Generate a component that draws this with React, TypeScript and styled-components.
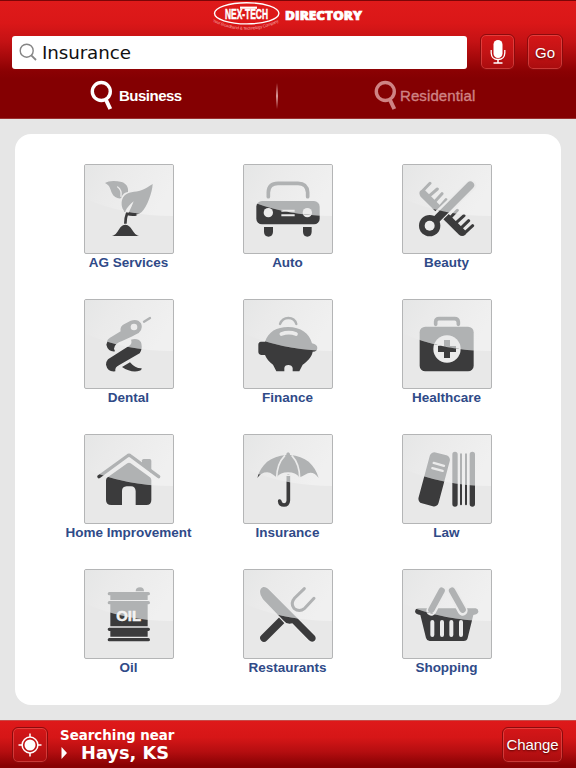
import React, { ReactNode } from "react";
import styled, { createGlobalStyle } from "styled-components";

const GlobalStyle = createGlobalStyle`
  *, *::before, *::after { box-sizing: border-box; }
  body { margin: 0; background: #e7e7e5; font-family: "Liberation Sans", Arial, sans-serif; }
`;

const Page = styled.div`
  width: 576px;
  height: 768px;
  display: flex;
  flex-direction: column;
  background: #e6e6e6;
  overflow: hidden;
`;

const Header = styled.header`
  height: 119px;
  flex: none;
  display: flex;
  flex-direction: column;
  border-top: 1px solid #7c0507;
  border-bottom: 1px solid #9a3030;
  background: linear-gradient(#df1a1a 0, #da1718 22px, #c51214 40px, #a90a0c 55px, #8b0103 70px, #840002 78px, #840002 100%);
`;

const LogoRow = styled.div`
  height: 33px;
  display: flex;
  justify-content: center;
`;

const SearchRow = styled.div`
  height: 36px;
  display: flex;
  align-items: center;
  padding: 0 13px 0 12px;
`;

const SearchBox = styled.div`
  width: 456px;
  height: 33px;
  margin-right: 13px;
  padding-left: 7px;
  display: flex;
  align-items: center;
  gap: 5px;
  border-radius: 3px;
  background: #fff;
  color: #111;
  font: 18.3px "DejaVu Sans", Verdana, sans-serif;
  letter-spacing: -0.1px;
`;

const GlossButton = styled.button<{ $width: number }>`
  width: ${(p) => p.$width}px;
  height: 36px;
  flex: none;
  padding: 0;
  display: flex;
  align-items: center;
  justify-content: center;
  border: 1px solid #8b0b0d;
  border-radius: 6px;
  box-shadow: inset 0 0 0 1px rgba(255, 130, 120, 0.38);
  background: linear-gradient(#d51618, #c11315 55%, #a90c0e);
  color: #fff;
  font: 15px "Liberation Sans", Arial, sans-serif;
  letter-spacing: -0.1px;
  text-shadow: 0 1px 2px rgba(70, 0, 0, 0.9);

  & + & { margin-left: 12px; }
`;

const Tabs = styled.nav`
  flex: 1;
  display: grid;
  grid-template-columns: 273px 8px 1fr;
  align-items: center;
  padding-top: 3px;
`;

const Tab = styled.div<{ $active?: boolean }>`
  display: flex;
  align-items: center;
  padding-left: ${(p) => (p.$active ? 90 : 93)}px;
  gap: ${(p) => (p.$active ? 3 : 0)}px;
  color: ${(p) => (p.$active ? "#fff" : "#cf8384")};
  font-size: 15px;
  font-weight: ${(p) => (p.$active ? 700 : 400)};
  letter-spacing: ${(p) => (p.$active ? "-0.5px" : "0.1px")};
  -webkit-text-stroke: ${(p) => (p.$active ? 0 : 0.35)}px currentColor;
`;

const Divider = styled.div`
  width: 2px;
  height: 26px;
  justify-self: center;
  background: linear-gradient(transparent, #d99a9a 50%, transparent);
`;

const Panel = styled.main`
  width: 546px;
  height: 571px;
  margin: 15px auto;
  padding: 30px 34px 0;
  flex: none;
  display: grid;
  grid-template-columns: repeat(3, 159px);
  grid-template-rows: repeat(4, 135px);
  border-radius: 16px;
  background: #fff;
`;

const Category = styled.div`
  display: flex;
  flex-direction: column;
  align-items: center;
`;

const TileFrame = styled.div`
  width: 90px;
  height: 90px;
  flex: none;
  border: 1px solid #b4b5b6;
  border-radius: 2px;
  background: #e8e8e8;
  overflow: hidden;

  svg { display: block; margin: -1px; }
`;

const Label = styled.div`
  margin-top: 1px;
  color: #2f4a88;
  font-size: 13.5px;
  line-height: 16px;
  font-weight: 700;
  white-space: nowrap;
`;

const Footer = styled.footer`
  height: 49px;
  flex: none;
  display: flex;
  align-items: center;
  padding: 0 13px 0 12px;
  border-top: 1px solid #c84a48;
  border-bottom: 1px solid #5c0003;
  background: linear-gradient(#de191a, #d61617 35%, #b50e10 65%, #870103 95%);
`;

const Place = styled.div`
  flex: 1;
  padding: 0 0 1px 12px;
  display: flex;
  flex-direction: column;
  color: #fff;
  font-family: "DejaVu Sans", Verdana, sans-serif;
  font-weight: 700;
`;

const PlaceHint = styled.div`
  font-size: 13.4px;
  line-height: 17px;
`;

const PlaceName = styled.div`
  display: flex;
  align-items: center;
  gap: 13px;
  font-size: 17.8px;
  line-height: 18px;
`;

const BG = "#ebebeb";
const UPPER = "M0 0V102Q120 156 270 156V0Z";
const LOWER = "M0 270V102Q120 156 270 156V270Z";

type TileProps = { id: string; ox: number; caption?: ReactNode; children: ReactNode };

// Each drawing is painted twice: pale above the gloss curve, dark below it.
function Tile({ id, ox, caption, children }: TileProps) {
  const shift = `translate(${-ox} -27)`;
  const art = <g transform={shift} fill="currentColor">{children}</g>;
  return (
    <TileFrame>
      <svg width="90" height="90" viewBox="0 0 270 270">
        <defs>
          <linearGradient id={`${id}-sheen`} x1="0" y1="0" x2="1" y2=".35">
            <stop offset="0" stopColor="#e5e6e6" />
            <stop offset=".35" stopColor="#eaeaea" />
            <stop offset="1" stopColor="#f0f0f0" />
          </linearGradient>
          <clipPath id={`${id}-up`}><path d={UPPER} /></clipPath>
          <clipPath id={`${id}-low`}><path d={LOWER} /></clipPath>
        </defs>
        <path d={UPPER} fill={`url(#${id}-sheen)`} />
        <g clipPath={`url(#${id}-up)`} color="#b0b2b3">{art}</g>
        <g clipPath={`url(#${id}-low)`} color="#3b3b3c">{art}</g>
        {caption && <g transform={shift}>{caption}</g>}
      </svg>
    </TileFrame>
  );
}

const line = (w: number, color = "currentColor", cap: "round" | "butt" = "round") => ({
  fill: "none",
  stroke: color,
  strokeWidth: w,
  strokeLinecap: cap,
  strokeLinejoin: "round" as const,
});

const Plant = () => (
  <>
    <path d="M136 84C146 77 166 76 186 81C199 85 207 96 205 111C196 111 189 117 184 130C174 132 162 126 157 115C151 101 151 91 136 84Z" />
    <path d="M174 96Q187 105 184 124" {...line(4, BG)} />
    <path d="M279 87C278 112 262 157 246 171C236 180 222 181 205 177C213 162 218 149 222 139C213 145 202 158 196 170C184 161 183 138 191 126C204 108 226 113 245 106C258 101 267 94 279 87Z" />
    <path d="M197 206Q197 188 202 176Q216 181 230 178" {...line(8, "#3b3b3c", "butt")} />
    <path d="M157 243C169 241 174 228 183 216Q197 203 211 216C221 228 226 241 238 243Z" />
  </>
);

const Car = () => (
  <>
    <path d="M145 125V112Q146 85 174 85H234Q261 85 263 112V125" {...line(11)} />
    <rect x="109" y="138" width="190" height="70" rx="17" />
    <circle cx="145" cy="173" r="14" fill={BG} />
    <circle cx="262" cy="173" r="14" fill={BG} />
    <path d="M184 167H224M184 181H224" {...line(6, BG, "butt")} />
    <path d="M132 216H159V231Q158 245 145.500 245Q133 245 132 231ZM249 216H275V231Q274 245 262 245Q250 245 249 231Z" />
  </>
);

const CombAndScissors = () => (
  <>
    <path d="M600 108L612 103L738 229L736 239Q726 247 717 239L602 125Q596 117 600 108Z" />
    <path d="M604 112L630 85M622 128L652 102M640 145L666 116M656 160L678 134M687 192L712 166M703 208L732 182M719 223L746 197M732 236L758 212" {...line(9)} />
    <path d="M641 197L752 91" {...line(34, BG)} />
    <path d="M645 197L751 91" {...line(23)} />
    <circle cx="629" cy="212" r="32" />
    <circle cx="629" cy="212" r="15" fill={BG} />
  </>
);

const Dental = () => (
  <>
    <path d="M253 95L271 84" {...line(7)} />
    <path d="M143 155Q141 149 151 143L183 124Q180 110 193 103L213 92Q234 85 244 100Q251 117 237 129Q221 138 189 152Q164 160 163 176L166 184Q145 186 140 164Z" />
    <circle cx="223" cy="111" r="10" fill={BG} />
    <path d="M145 208L211 166Q218 159 214 149Q235 143 244 157Q250 175 240 190L179 225Q165 231 167 244Q144 247 139 224Q139 215 145 208Z" />
    <path d="M187 231L211 217Q227 236 246 235Q247 242 233 244Q210 247 187 231Z" />
  </>
);

const Piggy = () => (
  <>
    <path d="M660 102Q667 84 685 84Q704 84 709 102" {...line(7)} />
    <path d="M615 155C625 125 650 111 684 111C723 111 748 130 756 160Q772 163 772 174Q772 185 758 185C755 203 739 216 728 224L718 244H698V234Q696 225 685 225Q674 225 673 234V244H649L639 224C627 215 620 207 615 195H603Q595 194 595 187V164Q595 156 603 155Z" />
    <path d="M664 132Q687 124 708 132" {...line(11, BG)} />
  </>
);

const MedicalBag = () => (
  <>
    <path d="M167 103V95Q168 86 177 86H224Q234 86 235 96V103" {...line(11)} />
    <rect x="119" y="110" width="162" height="134" rx="17" />
    <circle cx="201" cy="177" r="41" fill={BG} />
    <path d="M192 150H210V168H228V186H210V204H192V186H174V168H192Z" />
  </>
);

const House = () => (
  <>
    <path d="M247 121V106Q248 102 253 102H270Q275 102 275 107V144Z" />
    <path d="M139 166Q139 160 144 157L203 115Q208 112 213 115L271 157Q275 160 275 166V225Q275 240 260 240H228V198Q227 184 214 184H201Q187 185 187 198V240H155Q139 240 139 225Z" />
    <path d="M118 155L203 93Q208 89 213 93L297 155" {...line(10)} />
  </>
);

const Umbrella = () => (
  <>
    <path d="M592 159C602 119 632 93 679 90V86Q684 77 690 86V90C736 93 765 119 776 159Q758 134 735 149Q724 156 718 157Q707 142 684 142Q661 142 650 157Q637 146 630 143Q606 138 592 159Z" />
    <path d="M675 91Q650 117 650 159M695 91Q719 117 719 159" {...line(5, BG, "butt")} />
    <path d="M685 153V226Q684 240 672 240Q660 240 659 228" {...line(11)} />
    <path d="M678 153V149H691V153" fill={BG} />
  </>
);

const Books = () => (
  <>
    <g transform="translate(162.500 163) rotate(15)">
      <rect x="-31" y="-79" width="62" height="158" rx="14" />
      <path d="M-14 -47H18M-14 -31H18" {...line(7, BG)} />
    </g>
    <path d="M225 88V237M277 88V237" {...line(16)} />
    <path d="M243 88V238M258 88V238" {...line(6)} />
  </>
);

const Barrel = () => (
  <>
    <path d="M228 94Q228 82 241 82Q253 82 253 94Z" />
    <path d="M149 101H266M149 128H266M149 208H266M149 239H266" {...line(10)} />
    <path d="M152 101H264V120H152ZM152 131H264V199H152ZM152 209H264V230H152Z" />
  </>
);

const BarrelText = () => (
  <text x="170" y="182" fontSize="42" fontWeight="700" fontFamily="Liberation Sans, Arial, sans-serif" fill="#f3f3f3" stroke="#f3f3f3" strokeWidth="1.500" textLength="74" lengthAdjust="spacingAndGlyphs">OIL</text>
);

const Cutlery = () => (
  <>
    <path d="M733 86L704 114Q690 130 702 145Q718 158 734 145L762 115" {...line(9)} />
    <path d="M666 180L612 234" {...line(23)} />
    <path d="M602 105Q596 86 610 81Q617 80 624 86L765 228Q770 237 763 243Q755 248 747 241L700 192Q681 195 671 182L609 118Z" {...line(7, BG)} />
    <path d="M602 105Q596 86 610 81Q617 80 624 86L765 228Q770 237 763 243Q755 248 747 241L697 190Q681 195 671 182L609 118Z" />
  </>
);

const Basket = () => (
  <>
    <path d="M113 145H287Q296 147 295 156Q293 163 280 165L263 234Q261 243 251 243H149Q140 242 138 234L121 165Q106 164 105 154Q106 146 113 145Z" />
    <path d="M185 92L154 152M216 92L248 152" {...line(30, BG)} />
    <path d="M185 92L154 149M216 92L248 149" {...line(19)} />
    <path d="M157 186V225M186 186V225M214 186V225M243 186V225" {...line(12, BG)} />
  </>
);

const categories = [
  { name: "AG Services", ox: 73, Art: Plant },
  { name: "Auto", ox: 69, Art: Car },
  { name: "Beauty", ox: 546, Art: CombAndScissors },
  { name: "Dental", ox: 73, Art: Dental },
  { name: "Finance", ox: 549, Art: Piggy },
  { name: "Healthcare", ox: 66, Art: MedicalBag },
  { name: "Home Improvement", ox: 73, Art: House },
  { name: "Insurance", ox: 549, Art: Umbrella },
  { name: "Law", ox: 66, Art: Books },
  { name: "Oil", ox: 73, Art: Barrel, caption: <BarrelText /> },
  { name: "Restaurants", ox: 549, Art: Cutlery },
  { name: "Shopping", ox: 66, Art: Basket },
];

const Logo = () => (
  <svg width="160" height="33" viewBox="208 1 160 33">
    <defs><path id="tagline" d="M212.500 21.500Q246 38 280 21.500" /></defs>
    <ellipse cx="246.700" cy="13.300" rx="32.200" ry="10.600" fill="none" stroke="#fff" strokeWidth="1.400" />
    <text x="225" y="19" fontSize="15.500" fontFamily="Liberation Sans, Arial, sans-serif" fontWeight="700" fill="#fff" stroke="#fff" strokeWidth=".5" textLength="43" lengthAdjust="spacingAndGlyphs">NEX-TECH</text>
    <path d="M240 6.600H257V8.800H240Z" fill="#fff" />
    <text fontSize="4.200" fill="#f4a7a5" fontFamily="Liberation Sans, Arial, sans-serif">
      <textPath href="#tagline" textLength="69">Your Broadband &amp; Technology Company</textPath>
    </text>
    <text x="285" y="20" fontSize="12.200" fontWeight="800" fontFamily="Open Sans, Arial, sans-serif" fill="#fff" stroke="#fff" strokeWidth=".7" textLength="77" lengthAdjust="spacingAndGlyphs">DIRECTORY</text>
  </svg>
);

const TabLens = () => (
  <svg width="26" height="32" viewBox="0 0 26 32" fill="none" stroke="currentColor">
    <circle cx="11.300" cy="11.500" r="9" strokeWidth="3.400" />
    <path d="M15.800 19.500L20.300 29" strokeWidth="4" />
  </svg>
);

export default function App() {
  return (
    <>
      <GlobalStyle />
      <Page>
        <Header>
          <LogoRow><Logo /></LogoRow>
          <SearchRow>
            <SearchBox>
              <svg width="18" height="18" viewBox="0 0 18 18" fill="none" stroke="#858585" strokeWidth="1.400">
                <circle cx="7.700" cy="7.700" r="6.500" />
                <path d="M12.300 12.300L17 17" strokeWidth="1.800" />
              </svg>
              Insurance
            </SearchBox>
            <GlossButton $width={35}>
              <svg width="16" height="26" viewBox="0 0 16 26" fill="none" stroke="#fff">
                <rect x="3.500" y="1" width="9" height="18" rx="4.500" fill="#fff" stroke="none" />
                <path d="M1.200 11V14Q1.500 20.500 8 20.500Q14.500 20.500 14.800 14V11" strokeWidth="1.300" />
                <path d="M8 20.500V24M3.500 24H12.500" strokeWidth="1.500" />
              </svg>
            </GlossButton>
            <GlossButton $width={36}>Go</GlossButton>
          </SearchRow>
          <Tabs>
            <Tab $active><TabLens />Business</Tab>
            <Divider />
            <Tab><TabLens />Residential</Tab>
          </Tabs>
        </Header>
        <Panel>
          {categories.map(({ name, ox, Art, caption }) => (
            <Category key={name}>
              <Tile id={name.replace(/\s/g, "")} ox={ox} caption={caption}><Art /></Tile>
              <Label>{name}</Label>
            </Category>
          ))}
        </Panel>
        <Footer>
          <GlossButton $width={36}>
            <svg width="24" height="24" viewBox="0 0 24 24" fill="none" stroke="#fff" strokeWidth="1.500">
              <circle cx="12" cy="12" r="5.500" fill="#fff" stroke="none" />
              <circle cx="12" cy="12" r="7.900" />
              <path d="M12 .5V4M12 20V23.500M.5 12H4M20 12H23.500" />
            </svg>
          </GlossButton>
          <Place>
            <PlaceHint>Searching near</PlaceHint>
            <PlaceName>
              <svg width="8" height="12" viewBox="0 0 8 12"><path d="M1.500 0L7 6L1.500 12Z" fill="#fff" /></svg>
              Hays, KS
            </PlaceName>
          </Place>
          <GlossButton $width={61}>Change</GlossButton>
        </Footer>
      </Page>
    </>
  );
}
